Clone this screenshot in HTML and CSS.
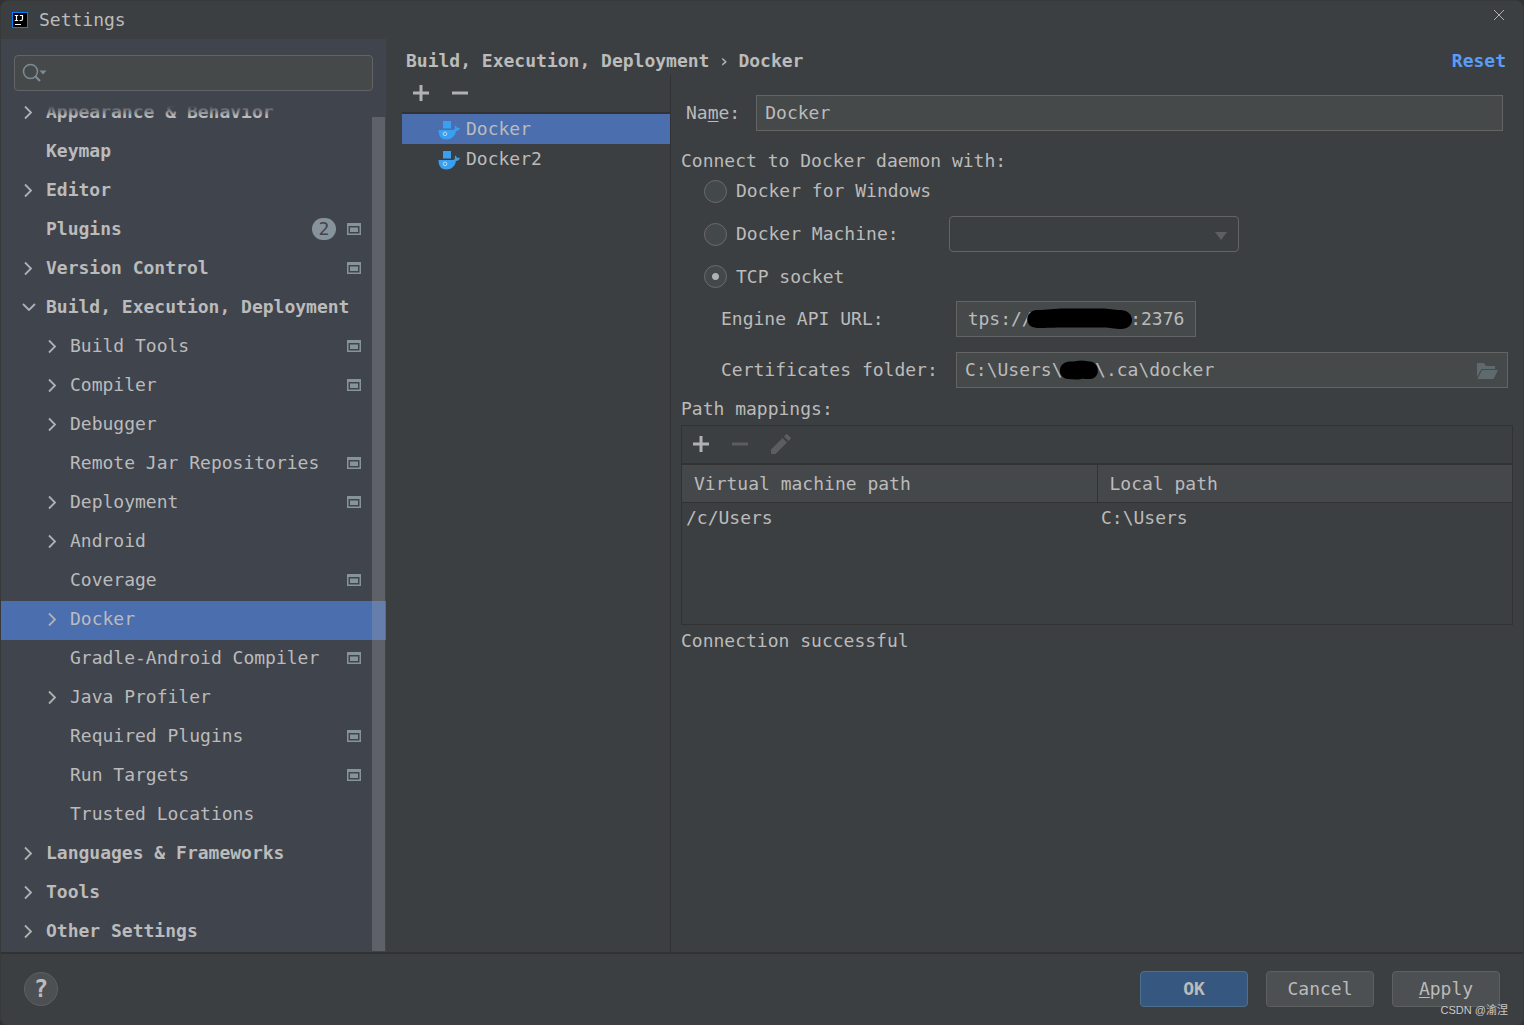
FILE: index.html
```html
<!DOCTYPE html>
<html lang="en">
<head>
<meta charset="utf-8">
<title>Settings</title>
<link rel="stylesheet" href="styles.css">
</head>
<body>
<svg class="defs" aria-hidden="true">
  <symbol id="right" viewBox="0 0 16 16"><path d="M5 2.500l6 6-6 6" fill="none" stroke="#afb1b3" stroke-width="1.800"/></symbol>
  <symbol id="down" viewBox="0 0 16 16"><path d="M3 5l6 6 6-6" fill="none" stroke="#afb1b3" stroke-width="1.800"/></symbol>
  <symbol id="project" viewBox="0 0 14 12"><path fill="#87939a" fill-rule="evenodd" d="M0 0h14v12H0zM1.500 3v7.500h11V3z"/><path fill="#87939a" d="M3 4.500h8v4.500H3z"/></symbol>
  <symbol id="plus" viewBox="0 0 16 16"><path d="M6.500 0h3v6.500H16v3H9.500V16h-3V9.500H0v-3h6.500z"/></symbol>
  <symbol id="minus" viewBox="0 0 16 16"><path d="M0 6.500h16v3H0z"/></symbol>
  <symbol id="whale" viewBox="0 0 22 20"><path fill="#3a9fee" d="M5 1h8v7.500H5zM.5 10H15c1.200 0 2-.8 2-2 0-1-.5-1.500 0-2.500 1.200.5 1.800 1.500 2 2.500.8-.3 2-.3 3 0-.4 1.500-1.800 2.800-4 3C17 16.500 13.500 19.500 8.500 19.500 3.500 19.500.5 16.500.5 10z"/><circle cx="7" cy="13.800" r="1.800" fill="none" stroke="#b8dcf8"/></symbol>
</svg>
<div class="window">
  <header class="titlebar">
    <svg class="logo" viewBox="0 0 16 16"><path fill="#087cfa" d="M0 0h16v16H0z"/><path fill="#000" d="M1 1h14v14H1z"/><path fill="#fff" d="M3 12h6v1H3z"/><path d="M2.800 3.500h3.400M4.500 3.500v5M2.800 8.500h3.400M7.800 3.500h2.700v3.500q0 1.500-1.500 1.500H7.600" fill="none" stroke="#fff" stroke-width="1.200"/></svg>
    <h1 class="title">Settings</h1>
    <button class="close" aria-label="Close"><svg width="10" height="10" viewBox="0 0 10 10"><path d="M0 0l10 10M10 0L0 10" stroke="#afb1b3"/></svg></button>
  </header>

  <div class="body">
    <aside class="sidebar">
      <div class="search">
        <svg class="search-icon" viewBox="0 0 26 20"><circle cx="8.500" cy="8.500" r="7" fill="none" stroke="#7f8b91" stroke-width="1.500"/><path d="M13 13l5 5" stroke="#7f8b91" stroke-width="2.200"/><path d="M17.500 7.500h7l-3.500 4z" fill="#7f8b91"/></svg>
        <input class="search-input" type="text" aria-label="Search settings">
      </div>
      <nav class="tree" aria-label="Settings categories">
        <ul class="rows">
          <li><a class="row top" href="#"><svg class="arrow"><use href="#right"/></svg><span class="label">Appearance &amp; Behavior</span></a></li>
          <li><a class="row top" href="#"><span class="arrow"></span><span class="label">Keymap</span></a></li>
          <li><a class="row top" href="#"><svg class="arrow"><use href="#right"/></svg><span class="label">Editor</span></a></li>
          <li><a class="row top" href="#"><span class="arrow"></span><span class="label">Plugins</span><span class="count">2</span><svg class="project"><use href="#project"/></svg></a></li>
          <li><a class="row top" href="#"><svg class="arrow"><use href="#right"/></svg><span class="label">Version Control</span><svg class="project"><use href="#project"/></svg></a></li>
          <li><a class="row top" href="#"><svg class="arrow"><use href="#down"/></svg><span class="label">Build, Execution, Deployment</span></a></li>
          <li><a class="row sub" href="#"><svg class="arrow"><use href="#right"/></svg><span class="label">Build Tools</span><svg class="project"><use href="#project"/></svg></a></li>
          <li><a class="row sub" href="#"><svg class="arrow"><use href="#right"/></svg><span class="label">Compiler</span><svg class="project"><use href="#project"/></svg></a></li>
          <li><a class="row sub" href="#"><svg class="arrow"><use href="#right"/></svg><span class="label">Debugger</span></a></li>
          <li><a class="row sub" href="#"><span class="arrow"></span><span class="label">Remote Jar Repositories</span><svg class="project"><use href="#project"/></svg></a></li>
          <li><a class="row sub" href="#"><svg class="arrow"><use href="#right"/></svg><span class="label">Deployment</span><svg class="project"><use href="#project"/></svg></a></li>
          <li><a class="row sub" href="#"><svg class="arrow"><use href="#right"/></svg><span class="label">Android</span></a></li>
          <li><a class="row sub" href="#"><span class="arrow"></span><span class="label">Coverage</span><svg class="project"><use href="#project"/></svg></a></li>
          <li><a class="row sub selected" href="#" aria-current="page"><svg class="arrow"><use href="#right"/></svg><span class="label">Docker</span></a></li>
          <li><a class="row sub" href="#"><span class="arrow"></span><span class="label">Gradle-Android Compiler</span><svg class="project"><use href="#project"/></svg></a></li>
          <li><a class="row sub" href="#"><svg class="arrow"><use href="#right"/></svg><span class="label">Java Profiler</span></a></li>
          <li><a class="row sub" href="#"><span class="arrow"></span><span class="label">Required Plugins</span><svg class="project"><use href="#project"/></svg></a></li>
          <li><a class="row sub" href="#"><span class="arrow"></span><span class="label">Run Targets</span><svg class="project"><use href="#project"/></svg></a></li>
          <li><a class="row sub" href="#"><span class="arrow"></span><span class="label">Trusted Locations</span></a></li>
          <li><a class="row top" href="#"><svg class="arrow"><use href="#right"/></svg><span class="label">Languages &amp; Frameworks</span></a></li>
          <li><a class="row top" href="#"><svg class="arrow"><use href="#right"/></svg><span class="label">Tools</span></a></li>
          <li><a class="row top" href="#"><svg class="arrow"><use href="#right"/></svg><span class="label">Other Settings</span></a></li>
        </ul>
        <div class="scroll-thumb"></div>
      </nav>
    </aside>

    <main class="content">
      <div class="crumbs">
        <span>Build, Execution, Deployment</span><span class="crumb-sep">›</span><span>Docker</span>
        <a class="reset" href="#">Reset</a>
      </div>
      <div class="panes">
        <section class="servers">
          <div class="toolbar">
            <button class="tool" aria-label="Add server"><svg width="16" height="16"><use href="#plus"/></svg></button>
            <button class="tool" aria-label="Remove server"><svg width="16" height="16"><use href="#minus"/></svg></button>
          </div>
          <ul class="server-list">
            <li class="server current"><svg width="22" height="20"><use href="#whale"/></svg><span>Docker</span></li>
            <li class="server"><svg width="22" height="20"><use href="#whale"/></svg><span>Docker2</span></li>
          </ul>
        </section>

        <form class="details">
          <div class="name-row">
            <label for="name">Na<u>m</u>e:</label>
            <input class="field" id="name" type="text" value="Docker">
          </div>
          <div class="section-label">Connect to Docker daemon with:</div>
          <div class="options">
            <div class="option"><input class="radio" type="radio" name="daemon" id="win"><label for="win">Docker for Windows</label></div>
            <div class="option machine"><input class="radio" type="radio" name="daemon" id="machine"><label for="machine">Docker Machine:</label>
              <div class="select-box"><select class="select" aria-label="Docker machine" disabled></select><svg class="select-arrow" viewBox="0 0 12 8"><path d="M0 0h12L6 8z" fill="#5e6060"/></svg></div>
            </div>
            <div class="option"><input class="radio" type="radio" name="daemon" id="tcp" checked><label for="tcp">TCP socket</label></div>
          </div>
          <div class="tcp-fields">
            <label for="url">Engine API URL:</label>
            <div class="url-box"><input class="field url" id="url" type="text" value="tps://         :2376">
              <svg class="url-mark" viewBox="0 0 108 21"><path d="M11 2C22 2 28 .5 40 .5h36C84 .5 88 2 96 2c14 1 15 18 1 19C88 21 86 19.500 78 19.500H38C28 19.500 22 20 11 20-2 20-2 3 11 2z"/></svg></div>
            <label for="certs">Certificates folder:</label>
            <div class="certs-box"><input class="field" id="certs" type="text" value="C:\Users\   \.ca\docker">
              <svg class="certs-mark" viewBox="0 0 38 20"><path d="M9 1.500C14 2 17 .5 22 .5c3 0 5 1 8 1 10 1 11 17 0 17.500-4 .5-6-1-9 0-5 1.200-9 0-13 0C-3 18-3 3 9 1.500z"/></svg>
              <button class="browse" type="button" aria-label="Browse"><svg width="22" height="18" viewBox="0 0 22 18"><path fill="#5f6a6e" d="M1 1h7l2 3h9v3H5.500L1 15zM6 8h16l-4.500 9H1.500z"/></svg></button></div>
          </div>
          <div class="section-label mappings-label">Path mappings:</div>
          <div class="mappings">
            <div class="toolbar">
              <button class="tool" type="button" aria-label="Add mapping"><svg width="16" height="16"><use href="#plus"/></svg></button>
              <button class="tool off" type="button" aria-label="Remove mapping" disabled><svg width="16" height="16"><use href="#minus"/></svg></button>
              <button class="tool off" type="button" aria-label="Edit mapping" disabled><svg width="20" height="20" viewBox="0 0 20 20"><path d="M0 15.500L11.500 4l4.500 4.500L4.500 20H0zM13 2.500L15 .5q.8-.8 1.600 0l2.900 2.900q.8.800 0 1.600l-2 2z"/></svg></button>
            </div>
            <table class="table">
              <thead><tr><th>Virtual machine path</th><th>Local path</th></tr></thead>
              <tbody><tr><td>/c/Users</td><td>C:\Users</td></tr></tbody>
            </table>
          </div>
          <div class="status">Connection successful</div>
        </form>
      </div>
    </main>
  </div>

  <footer class="footer">
    <button class="help" aria-label="Help">?</button>
    <button class="button primary">OK</button>
    <button class="button">Cancel</button>
    <button class="button"><u>A</u>pply</button>
    <div class="watermark">CSDN @渝涅</div>
  </footer>
</div>
</body>
</html>
```
FILE: styles.css
```css
* { box-sizing: border-box; }

body {
  margin: 0;
  background: #323232;
  color: #bbbbbb;
  font: 18px/24px "DejaVu Sans Mono", "Liberation Mono", monospace;
}

button, input, select { font: inherit; color: inherit; margin: 0; }
button { border: 0; background: none; padding: 0; }
a { color: inherit; text-decoration: none; }
ul { list-style: none; margin: 0; padding: 0; }
svg { display: block; flex: none; }
u { text-underline-offset: 2px; text-decoration-thickness: 1px; }
.defs { display: none; }

.window {
  display: flex;
  flex-direction: column;
  min-height: 100vh;
  border: 1px solid #37393a;
  border-radius: 8px;
  background: #3c3f41;
}

.titlebar {
  display: flex;
  align-items: center;
  height: 38px;
  padding: 0 19px 0 11px;
}
.logo { width: 16px; height: 16px; }
.title { margin: 0 0 0 11px; font-size: 18px; font-weight: normal; }
.close { margin: 0 0 10px auto; }

.body { display: flex; flex: 1; }

.sidebar {
  display: flex;
  flex-direction: column;
  width: 385px;
  padding-top: 16px;
  background: #40444d;
}
.search {
  display: flex;
  align-items: center;
  height: 36px;
  margin: 0 13px;
  padding-left: 7px;
  border: 1px solid #646464;
  border-radius: 4px;
  background: #45494a;
}
.search-icon { width: 26px; height: 20px; }
.search-input { flex: 1; min-width: 0; border: 0; outline: 0; background: none; }

.tree {
  position: relative;
  flex: 1;
  margin-top: 15px;
  overflow: hidden;
}
.tree::before {
  content: "";
  position: absolute;
  inset: 0 0 auto 40px;
  height: 10px;
  background: linear-gradient(#40444d, #40444d00);
}
/* The list is scrolled part of a row down. */
.rows { margin-top: -12px; }
.row {
  display: flex;
  align-items: center;
  height: 39px;
  padding: 0 25px 4px 19px;
}
.row.sub { padding-left: 43px; }
.row.top { font-weight: bold; }
.row.selected { background: #4b6eaf; }
.arrow { width: 16px; height: 16px; margin-right: 10px; flex: none; }
.label { flex: 1; white-space: nowrap; }
.count {
  width: 24px;
  height: 22px;
  margin-right: 11px;
  border-radius: 11px;
  background: #87939a;
  color: #40444d;
  font-weight: normal;
  line-height: 22px;
  text-align: center;
}
.project { width: 14px; height: 12px; }
.scroll-thumb {
  position: absolute;
  inset: 11px 1px 1px auto;
  width: 13px;
  background: #a6a6a64d;
}

.content { display: flex; flex-direction: column; flex: 1; min-width: 0; }
.crumbs {
  display: flex;
  align-items: center;
  height: 36px;
  padding: 8px 17px 0 20px;
  font-weight: bold;
}
.crumb-sep { width: 29px; text-align: center; font-size: 18px; font-weight: normal; }
.reset { margin-left: auto; color: #589df6; }

.panes { display: flex; flex: 1; }
.servers { width: 285px; padding-left: 16px; border-right: 1px solid #323232; }
.toolbar {
  display: flex;
  align-items: center;
  gap: 23px;
  height: 39px;
  padding: 0 0 2px 11px;
  border-bottom: 2px solid #323232;
}
.tool { fill: #afb1b3; }
.tool.off { fill: #5b5d5e; }
.server {
  display: flex;
  align-items: center;
  gap: 6px;
  height: 30px;
  padding-left: 36px;
}
.server svg { margin-top: 2px; }
.server.current { background: #4b6eaf; }

.details { flex: 1; min-width: 0; padding: 20px 10px 0; }
.name-row {
  display: flex;
  align-items: center;
  gap: 16px;
  padding: 0 10px 0 5px;
}
.field {
  display: block;
  width: 100%;
  height: 36px;
  padding: 0 8px 1px;
  border: 1px solid #646464;
  border-radius: 0;
  outline: 0;
  background: #45494a;
}
.section-label { height: 30px; margin-top: 15px; line-height: 30px; }
.options {
  display: grid;
  grid-template-rows: 30px 34px 29px;
  row-gap: 11px;
  padding-left: 23px;
}
.option { display: flex; align-items: center; }
.option label { padding-left: 9px; }
.radio {
  appearance: none;
  width: 23px;
  height: 23px;
  border: 1px solid #6b6b6b;
  border-radius: 50%;
  background: #43494a;
}
.radio:checked { background: radial-gradient(circle, #afb1b3 0 3px, #43494a 4px); }
.machine label { width: 222px; }
.select-box { position: relative; width: 290px; height: 36px; }
.select {
  appearance: none;
  width: 100%;
  height: 100%;
  border: 1px solid #646464;
  border-radius: 4px;
  background: #3c3f41;
  opacity: 1;
}
.select-arrow {
  position: absolute;
  top: 16px;
  right: 12px;
  width: 12px;
  height: 8px;
  pointer-events: none;
}
.tcp-fields {
  display: grid;
  grid-template-columns: 235px 1fr;
  gap: 15px 0;
  align-items: center;
  margin-top: 10px;
  padding: 0 5px 0 40px;
}
.url-box { position: relative; width: 240px; }
.url { text-align: center; }
.certs-box { position: relative; }
.url-mark { position: absolute; top: 7px; left: 70px; width: 107px; height: 21px; }
.certs-mark { position: absolute; top: 8px; left: 104px; width: 38px; height: 20px; }
.browse { position: absolute; top: 10px; right: 10px; }

.mappings-label { margin-top: 6px; }
.mappings { height: 200px; margin-top: 1px; border: 1px solid #323232; }
.table { width: 100%; border-collapse: collapse; table-layout: fixed; }
.table th {
  height: 37px;
  padding: 2px 12px 0;
  border-bottom: 1px solid #323232;
  background: #45484a;
  font-weight: normal;
  text-align: left;
}
.table th + th { border-left: 1px solid #323232; }
.table td { height: 30px; padding: 2px 4px 0; }
.status { height: 32px; line-height: 32px; }

.footer {
  position: relative;
  display: flex;
  align-items: center;
  gap: 18px;
  height: 73px;
  padding: 0 23px 2px;
  border-top: 2px solid #323232;
}
.help {
  width: 34px;
  height: 34px;
  margin-right: auto;
  border: 1px solid #5e6060;
  border-radius: 50%;
  background: #4c5052;
  font-size: 24px;
  font-weight: bold;
}
.button {
  width: 108px;
  height: 36px;
  border: 1px solid #5e6060;
  border-radius: 4px;
  background: #4c5052;
}
.primary { border-color: #4c708c; background: #365880; font-weight: bold; }
.watermark {
  position: absolute;
  right: 15px;
  bottom: 5px;
  color: #c8c8c8;
  font: 11px/20px "Liberation Sans", "Noto Sans CJK SC", sans-serif;
}
```
